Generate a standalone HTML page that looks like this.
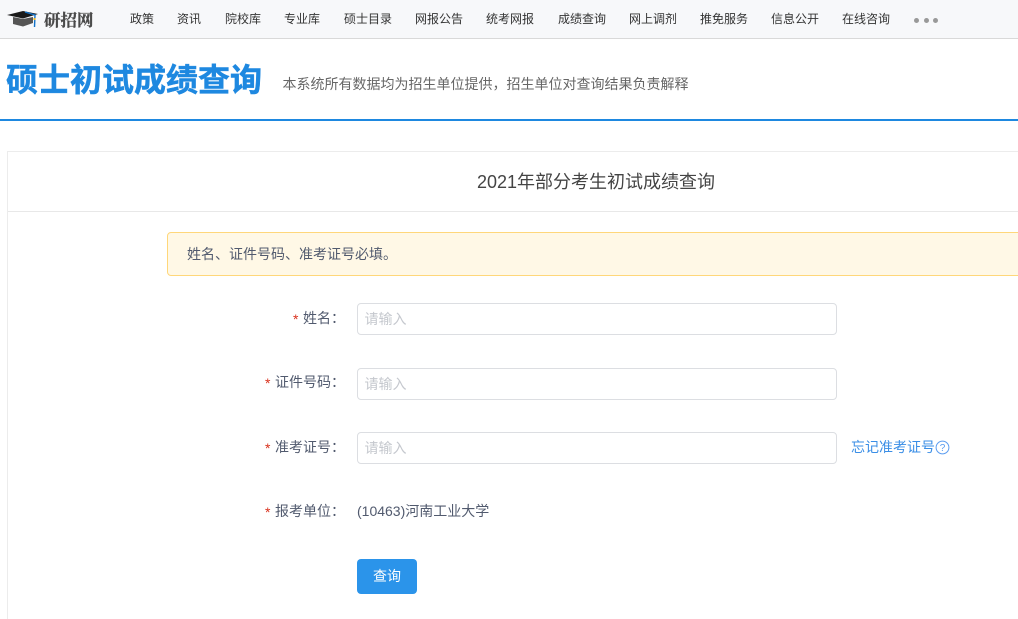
<!DOCTYPE html>
<html lang="zh-CN">
<head>
<meta charset="utf-8">
<title>硕士初试成绩查询</title>
<style>
html,body{margin:0;padding:0;width:1018px;height:619px;overflow:hidden;background:#fff;}
body{position:relative;font-family:"Liberation Sans","Noto Sans CJK SC",sans-serif;color:#515a6e;}
.a{position:absolute;white-space:nowrap;}
.top{left:0;top:0;width:1018px;height:38px;background:#f7f8fa;border-bottom:1px solid #d9d9d9;}
.n{top:11px;font-size:12px;line-height:17px;color:#333;}
.dot{top:17.5px;width:5px;height:5px;border-radius:50%;background:#999;}
.inp{left:357px;width:478px;height:30px;border:1px solid #dcdee2;border-radius:4px;background:#fff;font-size:14px;line-height:30px;color:#c5c8ce;text-indent:6.5px;}
.lab{font-size:14px;line-height:20px;color:#515a6e;}
.star{font-size:14px;line-height:20px;color:#d9301c;}
</style>
</head>
<body>
<div class="a top"></div>
<svg class="a" style="left:7px;top:9px" width="33" height="19" viewBox="0 0 33 19">
<path d="M6 8 L16 10 L26 8 L26 14 L16 17.5 L6 15 Z" fill="#555"/>
<path d="M0 6 L16 2 L31 5 L16 9.5 Z" fill="#1a1a1a"/>
<path d="M18 3 L28 6 L27.5 18" fill="none" stroke="#1272c9" stroke-width="1.4"/>
<rect x="26.5" y="9" width="2" height="2" fill="#e6b422"/>
</svg>
<div class="a" style="left:44px;top:9px;font-family:'Noto Serif CJK SC',serif;font-weight:700;font-size:16.5px;line-height:20px;color:#4a4a4a;-webkit-text-stroke:.3px #4a4a4a;">研招网</div>

<div class="a n" style="left:130px">政策</div>
<div class="a n" style="left:177px">资讯</div>
<div class="a n" style="left:225px">院校库</div>
<div class="a n" style="left:284px">专业库</div>
<div class="a n" style="left:344px">硕士目录</div>
<div class="a n" style="left:415px">网报公告</div>
<div class="a n" style="left:486px">统考网报</div>
<div class="a n" style="left:558px">成绩查询</div>
<div class="a n" style="left:629px">网上调剂</div>
<div class="a n" style="left:700px">推免服务</div>
<div class="a n" style="left:771px">信息公开</div>
<div class="a n" style="left:842px">在线咨询</div>
<div class="a dot" style="left:914px"></div>
<div class="a dot" style="left:923.5px"></div>
<div class="a dot" style="left:933px"></div>

<div class="a" style="left:6px;top:61px;font-size:32px;line-height:38px;font-weight:700;color:#1e88e0;-webkit-text-stroke:.5px #1e88e0;">硕士初试成绩查询</div>
<div class="a" style="left:282.5px;top:74px;font-size:14px;line-height:20px;color:#666;">本系统所有数据均为招生单位提供，招生单位对查询结果负责解释</div>
<div class="a" style="left:0;top:119px;width:1018px;height:2px;background:#1e88e0;"></div>

<div class="a" style="left:7px;top:151px;width:1020px;height:480px;border:1px solid #ececec;box-sizing:border-box;"></div>
<div class="a" style="left:8px;top:211px;width:1010px;height:1px;background:#e8e8e8;"></div>
<div class="a" style="left:477px;top:170px;font-size:18px;line-height:24px;color:#444;">2021年部分考生初试成绩查询</div>

<div class="a" style="left:167px;top:232px;width:900px;height:42px;background:#fff8e6;border:1px solid #ffd77a;border-radius:4px;"></div>
<div class="a" style="left:187px;top:244px;font-size:14px;line-height:20px;color:#515a6e;">姓名、证件号码、准考证号必填。</div>

<div class="a star" style="left:293px;top:309px">*</div>
<div class="a lab" style="left:303px;top:308px">姓名：</div>
<div class="a inp" style="top:303px">请输入</div>

<div class="a star" style="left:265px;top:373px">*</div>
<div class="a lab" style="left:275px;top:372px">证件号码：</div>
<div class="a inp" style="top:368px">请输入</div>

<div class="a star" style="left:265px;top:438px">*</div>
<div class="a lab" style="left:275px;top:437px">准考证号：</div>
<div class="a inp" style="top:432px">请输入</div>
<div class="a" style="left:851px;top:437px;font-size:14px;line-height:20px;color:#3a8ee6;">忘记准考证号</div>
<svg class="a" style="left:935px;top:440px" width="15" height="15" viewBox="0 0 15 15">
<circle cx="7.5" cy="7.5" r="6.4" fill="none" stroke="#5a9cf0" stroke-width="1"/>
<text x="7.5" y="11.2" font-size="10" text-anchor="middle" fill="#5a9cf0" font-family="Liberation Sans,sans-serif">?</text>
</svg>

<div class="a star" style="left:265px;top:502px">*</div>
<div class="a lab" style="left:275px;top:501px">报考单位：</div>
<div class="a lab" style="left:357px;top:501px">(10463)河南工业大学</div>

<div class="a" style="left:357px;top:559px;width:60px;height:35px;border-radius:4px;background:#2b94ea;color:#fff;font-size:14px;line-height:35px;text-align:center;">查询</div>
</body>
</html>
